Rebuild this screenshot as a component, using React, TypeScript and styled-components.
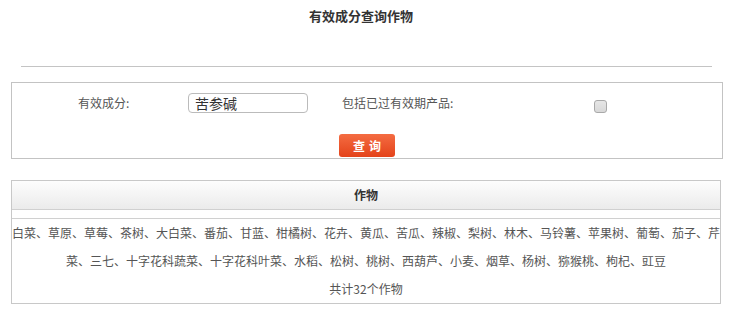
import React, { useState } from "react"
import styled, { createGlobalStyle } from "styled-components"

const GlobalStyle = createGlobalStyle`
  body {
    margin: 0;
    background: #fff;
    font-family: "Noto Sans CJK SC", "Noto Sans", sans-serif;
    font-size: 12px;
    color: #555;
  }
`

const crops = [
  "白菜", "草原", "草莓", "茶树", "大白菜", "番茄", "甘蓝", "柑橘树", "花卉", "黄瓜",
  "苦瓜", "辣椒", "梨树", "林木", "马铃薯", "苹果树", "葡萄", "茄子", "芹菜", "三七",
  "十字花科蔬菜", "十字花科叶菜", "水稻", "松树", "桃树", "西葫芦", "小麦", "烟草",
  "杨树", "猕猴桃", "枸杞", "豇豆",
]

const Page = styled.div`
  padding: 0 10px 0 11px;
`

const Title = styled.h1`
  margin: 0;
  padding: 6px 12px 0 0;
  font-size: 13px;
  line-height: 20px;
  font-weight: bold;
  color: #333;
  text-align: center;
`

const Divider = styled.div`
  margin: 40px 11px 0 10px;
  border-top: 1px solid #c4c4c4;
`

const SearchBox = styled.div`
  margin-top: 15px;
  border: 1px solid #c3c3c3;
  height: 75px;
`

const Fields = styled.div`
  display: grid;
  grid-template-columns: 110px 154px 252px auto;
  align-items: center;
  height: 40px;
  padding-left: 66px;
`

const Label = styled.span`
  color: #555;
  line-height: 20px;
  white-space: nowrap;
`

const TextInput = styled.input`
  box-sizing: border-box;
  width: 120px;
  height: 20px;
  padding: 0 6px;
  border: 1px solid #bbb;
  border-radius: 4px;
  font-family: inherit;
  font-size: 14px;
  color: #333;
  outline: none;
`

const Check = styled.input`
  appearance: none;
  margin: 7px 0 0;
  width: 13px;
  height: 13px;
  border: 1px solid #a9a9a9;
  border-radius: 3px;
  background: linear-gradient(#e6e6e6, #d8d8d8);
  box-sizing: border-box;

  &:checked {
    background: #4a90d9;
    border-color: #3a78b8;
  }
`

const Actions = styled.div`
  display: flex;
  justify-content: center;
  margin-top: 11px;
`

const SearchButton = styled.button`
  width: 56px;
  height: 23px;
  padding: 0;
  border: none;
  border-radius: 3px;
  background: linear-gradient(#f46c42, #e4431a);
  color: #fff;
  font-family: inherit;
  font-size: 12px;
  font-weight: bold;
  letter-spacing: 4px;
  text-indent: 4px;
  cursor: pointer;
`

const ResultTable = styled.div`
  width: 710px;
  margin-top: 21px;
  border: 1px solid #c8c8c8;
  box-sizing: border-box;
`

const HeadCell = styled.div`
  height: 28px;
  line-height: 28px;
  border-bottom: 1px solid #d0d0d0;
  background: linear-gradient(#fdfdfd, #ebebeb);
  text-align: center;
  font-weight: bold;
  color: #333;
`

const Spacer = styled.div`
  height: 8px;
  border-bottom: 1px solid #d0d0d0;
`

const BodyCell = styled.div`
  text-align: center;
  line-height: 28px;
  color: #555;
`

export default function App() {
  const [expired, setExpired] = useState(false)

  return (
    <Page>
      <GlobalStyle />
      <Title>有效成分查询作物</Title>
      <Divider />

      <SearchBox>
        <Fields>
          <Label>有效成分:</Label>
          <TextInput defaultValue="苦参碱" />
          <Label>包括已过有效期产品:</Label>
          <Check
            type="checkbox"
            checked={expired}
            onChange={e => setExpired(e.target.checked)}
          />
        </Fields>
        <Actions>
          <SearchButton>查询</SearchButton>
        </Actions>
      </SearchBox>

      <ResultTable>
        <HeadCell>作物</HeadCell>
        <Spacer />
        <BodyCell>
          <div>{crops.join("、")}</div>
          <div>共计{crops.length}个作物</div>
        </BodyCell>
      </ResultTable>
    </Page>
  )
}
